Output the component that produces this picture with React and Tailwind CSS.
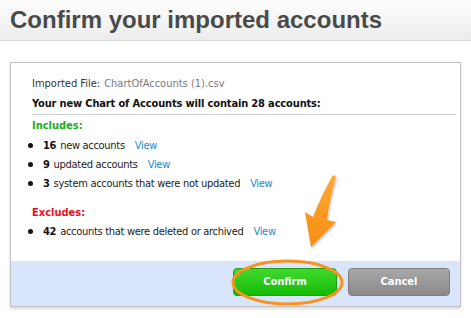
import React from "react";

const bodyFont = { fontFamily: "'DejaVu Sans Condensed', 'DejaVu Sans', Tahoma, sans-serif" };

const Item = ({ count, label, h = "h-[19px]" }) => (
  <li className={`flex items-center ${h}`}>
    <span className="w-[5px] h-[5px] rounded-full bg-[#111] ml-[-4px] mr-[10px]"></span>
    <span className="font-bold text-[#111]">{count}</span>
    <span className="ml-[4px] text-[#222]">{label}</span>
    <span className="ml-[10px] text-[#1a8bd0]">View</span>
  </li>
);

const App = () => {
  return (
    <div className="relative w-[471px] h-[318px] bg-white overflow-hidden">
      {/* header */}
      <div className="h-[41px] flex items-center pl-[10px] bg-gradient-to-b from-[#fefefe] to-[#ececec] border-b border-[#d6d6d6]">
        <h1
          className="text-[24px] font-bold text-[#4a4a4a]"
          style={{ fontFamily: "'Liberation Sans', Arial, sans-serif" }}
        >
          Confirm your imported accounts
        </h1>
      </div>

      {/* panel */}
      <div className="ml-[10px] mt-[21px] w-[451px] border border-[#c2c2c2] shadow-[0_2px_3px_rgba(0,0,0,0.15)]">
        <div className="h-[198px] pl-[21px] pr-[4px] pt-[11px] text-[11px] leading-[19px]" style={bodyFont}>
          <div className="h-[19px] flex items-center">
            <span className="text-[#333]">Imported File:</span>
            <span className="ml-[4px] text-[#7a7a7a]">ChartOfAccounts (1).csv</span>
          </div>
          <div className="h-[20px] flex items-center font-bold text-[#111] tracking-[-0.15px]">
            Your new Chart of Accounts will contain 28 accounts:
          </div>
          <div className="mt-[1px] h-px bg-[#cfcfcf]"></div>
          <div className="h-[20px] flex items-center font-bold text-[#1aae1a]">
            Includes:
          </div>
          <ul className="tracking-[-0.3px]">
            <Item count="16" label="new accounts" h="h-[20px]" />
            <Item count="9" label="updated accounts" />
            <Item count="3" label="system accounts that were not updated" />
          </ul>
          <div className="mt-[9px] h-[20px] flex items-center font-bold text-[#e8121c]">
            Excludes:
          </div>
          <ul className="tracking-[-0.3px]">
            <Item count="42" label="accounts that were deleted or archived" />
          </ul>
        </div>

        {/* footer */}
        <div className="h-[45px] bg-[#d9e5fc] flex justify-end items-start pt-[7px] pr-[10px] gap-[11px]">
          <button
            className="w-[104px] h-[28px] rounded-[4px] border border-[#19a10f] bg-gradient-to-b from-[#3fd92c] to-[#12bb02] text-white font-bold text-[11px]"
            style={bodyFont}
          >
            Confirm
          </button>
          <button
            className="w-[102px] h-[28px] rounded-[4px] border border-[#7d7d7d] bg-gradient-to-b from-[#a8a8a8] to-[#8a8a8a] text-white font-bold text-[11px]"
            style={bodyFont}
          >
            Cancel
          </button>
        </div>
      </div>

      {/* annotation overlay */}
      <svg className="absolute left-0 top-0 pointer-events-none" width="471" height="318">
        <defs>
          <linearGradient id="arr" x1="0" y1="0" x2="0" y2="1">
            <stop offset="0" stopColor="#ffa733" />
            <stop offset="1" stopColor="#f68e14" />
          </linearGradient>
          <filter id="sh" x="-30%" y="-30%" width="160%" height="160%">
            <feDropShadow dx="1" dy="1.5" stdDeviation="1.2" floodColor="#000" floodOpacity="0.25" />
          </filter>
        </defs>
        <path
          d="M333 175 Q 322 194 313 217 L 305 212 L 311 247 L 336 222 L 327 220 Q 330 197 336 177 Z"
          fill="url(#arr)"
          filter="url(#sh)"
        />
        <ellipse cx="287.5" cy="282.5" rx="54.5" ry="21.5" fill="none" stroke="#f7931e" strokeWidth="3" />
      </svg>
    </div>
  );
};

export default App;
